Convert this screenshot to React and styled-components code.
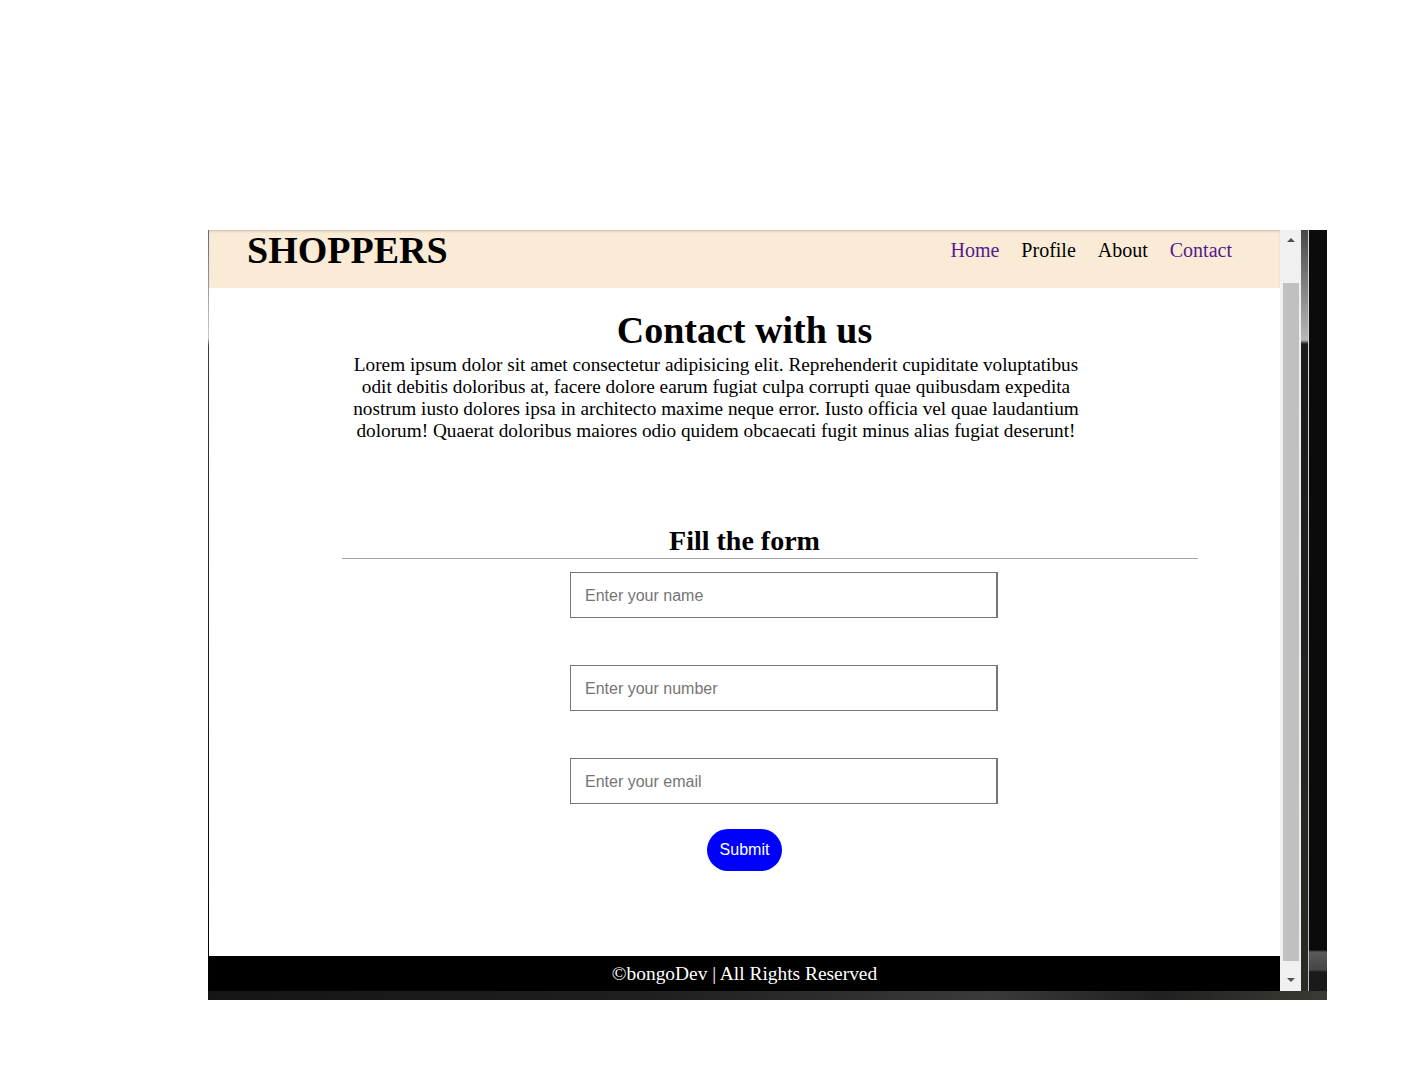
import React from 'react'
import styled, { createGlobalStyle } from 'styled-components'

const GlobalStyle = createGlobalStyle`
  html, body {
    margin: 0;
    padding: 0;
    background: #ffffff;
    font-family: "Liberation Serif", "Times New Roman", serif;
  }`

const Page = styled.div`
  width: 1402px;
  height: 1070px;
  padding: 230px 0 0 208px;
  box-sizing: border-box;
  overflow: hidden;`

const Shot = styled.div`
  width: 1119px;
  display: flex;
  flex-direction: column;`

const TopRow = styled.div`
  display: flex;
  height: 761px;`

const Edge = styled.div`
  width: 1px;
  background: linear-gradient(#6a6a6a 0, #c8c8c8 108px, #3a3a3a 116px, #000 100%);`

const Viewport = styled.div`
  width: 1071px;
  display: flex;
  flex-direction: column;
  background: #ffffff;`

const Header = styled.header`
  height: 58px;
  flex-shrink: 0;
  background-color: #faebd7;
  box-shadow: inset 0 2px 3px -1px rgba(0, 0, 0, 0.2);
  display: flex;
  justify-content: space-between;
  align-items: flex-start;
  padding: 0 48px 0 38px;`

const Logo = styled.h1`
  margin: 0;
  font-size: 38px;
  line-height: 40px;
  font-weight: bold;
  color: #000;`

const Nav = styled.nav`
  display: flex;
  gap: 22px;`

const NavLink = styled.a`
  font-size: 20px;
  line-height: 40px;
  text-decoration: none;
  color: ${p => (p.$visited ? '#551a8b' : '#000000')};`

const Main = styled.main`
  flex: 1;
  display: flex;
  flex-direction: column;`

const Title = styled.h2`
  margin: 20px 0 0;
  font-size: 38px;
  line-height: 44px;
  text-align: center;`

const Intro = styled.p`
  width: 740px;
  margin: 2px 0 0 137px;
  font-size: 19.25px;
  line-height: 22px;
  text-align: center;`

const FormTitle = styled.h3`
  margin: 83px 0 0;
  font-size: 28px;
  line-height: 32px;
  text-align: center;`

const Rule = styled.div`
  margin: 1px 0 0 133px;
  width: 856px;
  border-top: 1px solid #a3a3a3;`

const Form = styled.form`
  display: flex;
  flex-direction: column;
  align-items: flex-start;
  gap: 47px;
  margin: 13px 0 0 361px;`

const Field = styled.input`
  width: 428px;
  height: 46px;
  box-sizing: border-box;
  border: 1px solid #767676;
  border-right-width: 2px;
  padding: 2px 14px 0;
  font-family: "Liberation Sans", Arial, sans-serif;
  font-size: 16px;
  &::placeholder {
    color: #757575;
  }`

const Submit = styled.button`
  align-self: center;
  margin-top: 25px;
  height: 42px;
  padding: 0 13px;
  border: none;
  border-radius: 21px;
  background: #0000ff;
  color: #fff;
  font-family: "Liberation Sans", Arial, sans-serif;
  font-size: 16px;`

const Footer = styled.footer`
  height: 35px;
  flex-shrink: 0;
  background: #000;
  color: #fff;
  font-size: 19.4px;
  line-height: 35px;
  text-align: center;`

const Scrollbar = styled.div`
  width: 21px;
  background: #f0f0f0;
  display: flex;
  flex-direction: column;
  align-items: center;`

const Arrow = styled.div`
  width: 0;
  height: 0;
  margin: ${p => (p.$down ? '17px 0 9px' : '8px 0 0')};
  border-left: 4px solid transparent;
  border-right: 4px solid transparent;
  border-${p => (p.$down ? 'top' : 'bottom')}: 4px solid #505050;`

const Thumb = styled.div`
  width: 16px;
  margin-top: 41px;
  flex: 1;
  background: #c0c0c0;`

const SideStrip = styled.div`
  width: 26px;
  display: flex;`

const Bevel = styled.div`
  width: 7px;
  background: linear-gradient(#474747 0, #b8b8b8 110px, #1a1a1a 114px, #2b2b26 100%);`

const Glint = styled.div`
  width: 1px;
  background: linear-gradient(#d8d8d8 0, #bdbdbd 100%);`

const Dark = styled.div`
  flex: 1;
  background: linear-gradient(#0b0b0b 0, #0b0b0b 720px, #5a5a5a 722px, #454545 740px, #1a1a1a 742px, #1a1a1a 100%);`

const BottomStrip = styled.div`
  height: 9px;
  background: linear-gradient(90deg, #151515 0, #1f1f1f 40%, #3a3a3a 70%, #202020 85%, #3b3b35 100%);`

export default function App() {
  return (
    <Page>
      <GlobalStyle />
      <Shot>
        <TopRow>
          <Edge />
          <Viewport>
            <Header>
              <Logo>SHOPPERS</Logo>
              <Nav>
                <NavLink href="#" $visited>Home</NavLink>
                <NavLink href="#">Profile</NavLink>
                <NavLink href="#">About</NavLink>
                <NavLink href="#" $visited>Contact</NavLink>
              </Nav>
            </Header>
            <Main>
              <Title>Contact with us</Title>
              <Intro>
                Lorem ipsum dolor sit amet consectetur adipisicing elit. Reprehenderit cupiditate voluptatibus
                odit debitis doloribus at, facere dolore earum fugiat culpa corrupti quae quibusdam expedita
                nostrum iusto dolores ipsa in architecto maxime neque error. Iusto officia vel quae laudantium
                dolorum! Quaerat doloribus maiores odio quidem obcaecati fugit minus alias fugiat deserunt!
              </Intro>
              <FormTitle>Fill the form</FormTitle>
              <Rule />
              <Form onSubmit={e => e.preventDefault()}>
                <Field type="text" placeholder="Enter your name" />
                <Field type="text" placeholder="Enter your number" />
                <Field type="email" placeholder="Enter your email" />
              </Form>
              <Submit type="button">Submit</Submit>
            </Main>
            <Footer>©bongoDev | All Rights Reserved</Footer>
          </Viewport>
          <Scrollbar>
            <Arrow />
            <Thumb />
            <Arrow $down />
          </Scrollbar>
          <SideStrip>
            <Bevel />
            <Glint />
            <Dark />
          </SideStrip>
        </TopRow>
        <BottomStrip />
      </Shot>
    </Page>
  )
}
